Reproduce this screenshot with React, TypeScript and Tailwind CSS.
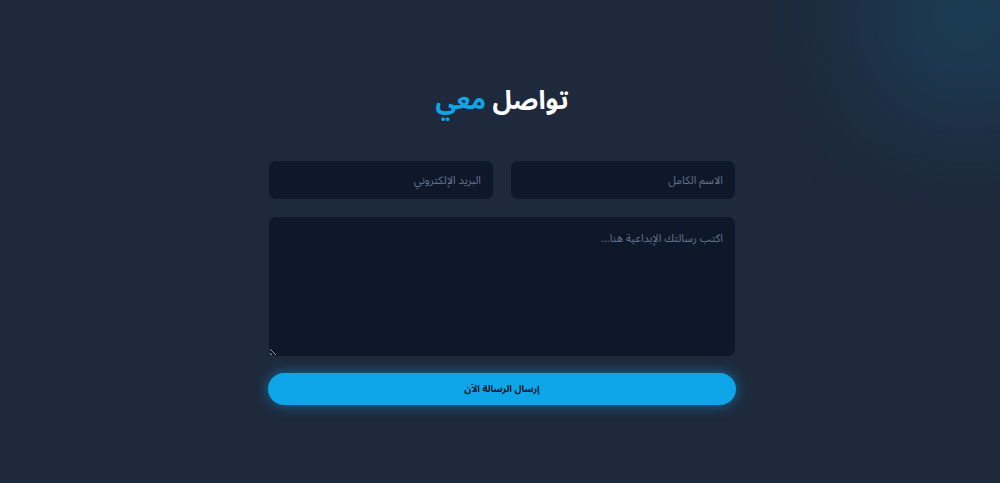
import React from "react";

export default function App() {
  return (
    <div
      dir="rtl"
      className="relative min-h-screen overflow-hidden bg-[#1e293b] pl-1"
      style={{ fontFamily: '"Noto Sans Arabic", "Noto Sans", sans-serif' }}
    >
      <div className="pointer-events-none absolute -right-16 -top-20 h-48 w-48 rounded-full bg-[#0ea5e9]/20 blur-3xl" />
      <div className="relative flex flex-col items-center pt-[83px] pb-[78px]">
        <h2 className="mb-[41px] text-[26px] font-bold leading-9 text-white">
          تواصل <span className="text-[#0ea5e9]">معي</span>
        </h2>
        <form className="flex w-[468px] flex-col gap-4" onSubmit={(e) => e.preventDefault()}>
          <div className="grid grid-cols-2 gap-4">
            <input
              type="text"
              placeholder="الاسم الكامل"
              className="h-10 rounded-lg border border-slate-800 bg-[#0f172a] px-3 text-[11px] text-white placeholder:text-slate-500 outline-none"
            />
            <input
              type="email"
              placeholder="البريد الإلكتروني"
              className="h-10 rounded-lg border border-slate-800 bg-[#0f172a] px-3 text-[11px] text-white placeholder:text-slate-500 outline-none"
            />
          </div>
          <textarea
            placeholder="اكتب رسالتك الإبداعية هنا..."
            className="h-[141px] rounded-lg border border-slate-800 bg-[#0f172a] px-3 py-3 text-[11px] leading-5 text-white placeholder:text-slate-500 outline-none"
          />
          <button
            type="submit"
            className="h-8 rounded-full bg-[#0ea5e9] text-[9.5px] font-bold text-slate-900 shadow-[0_0_14px_rgba(14,165,233,0.55)]"
          >
            إرسال الرسالة الآن
          </button>
        </form>
      </div>
    </div>
  );
}
